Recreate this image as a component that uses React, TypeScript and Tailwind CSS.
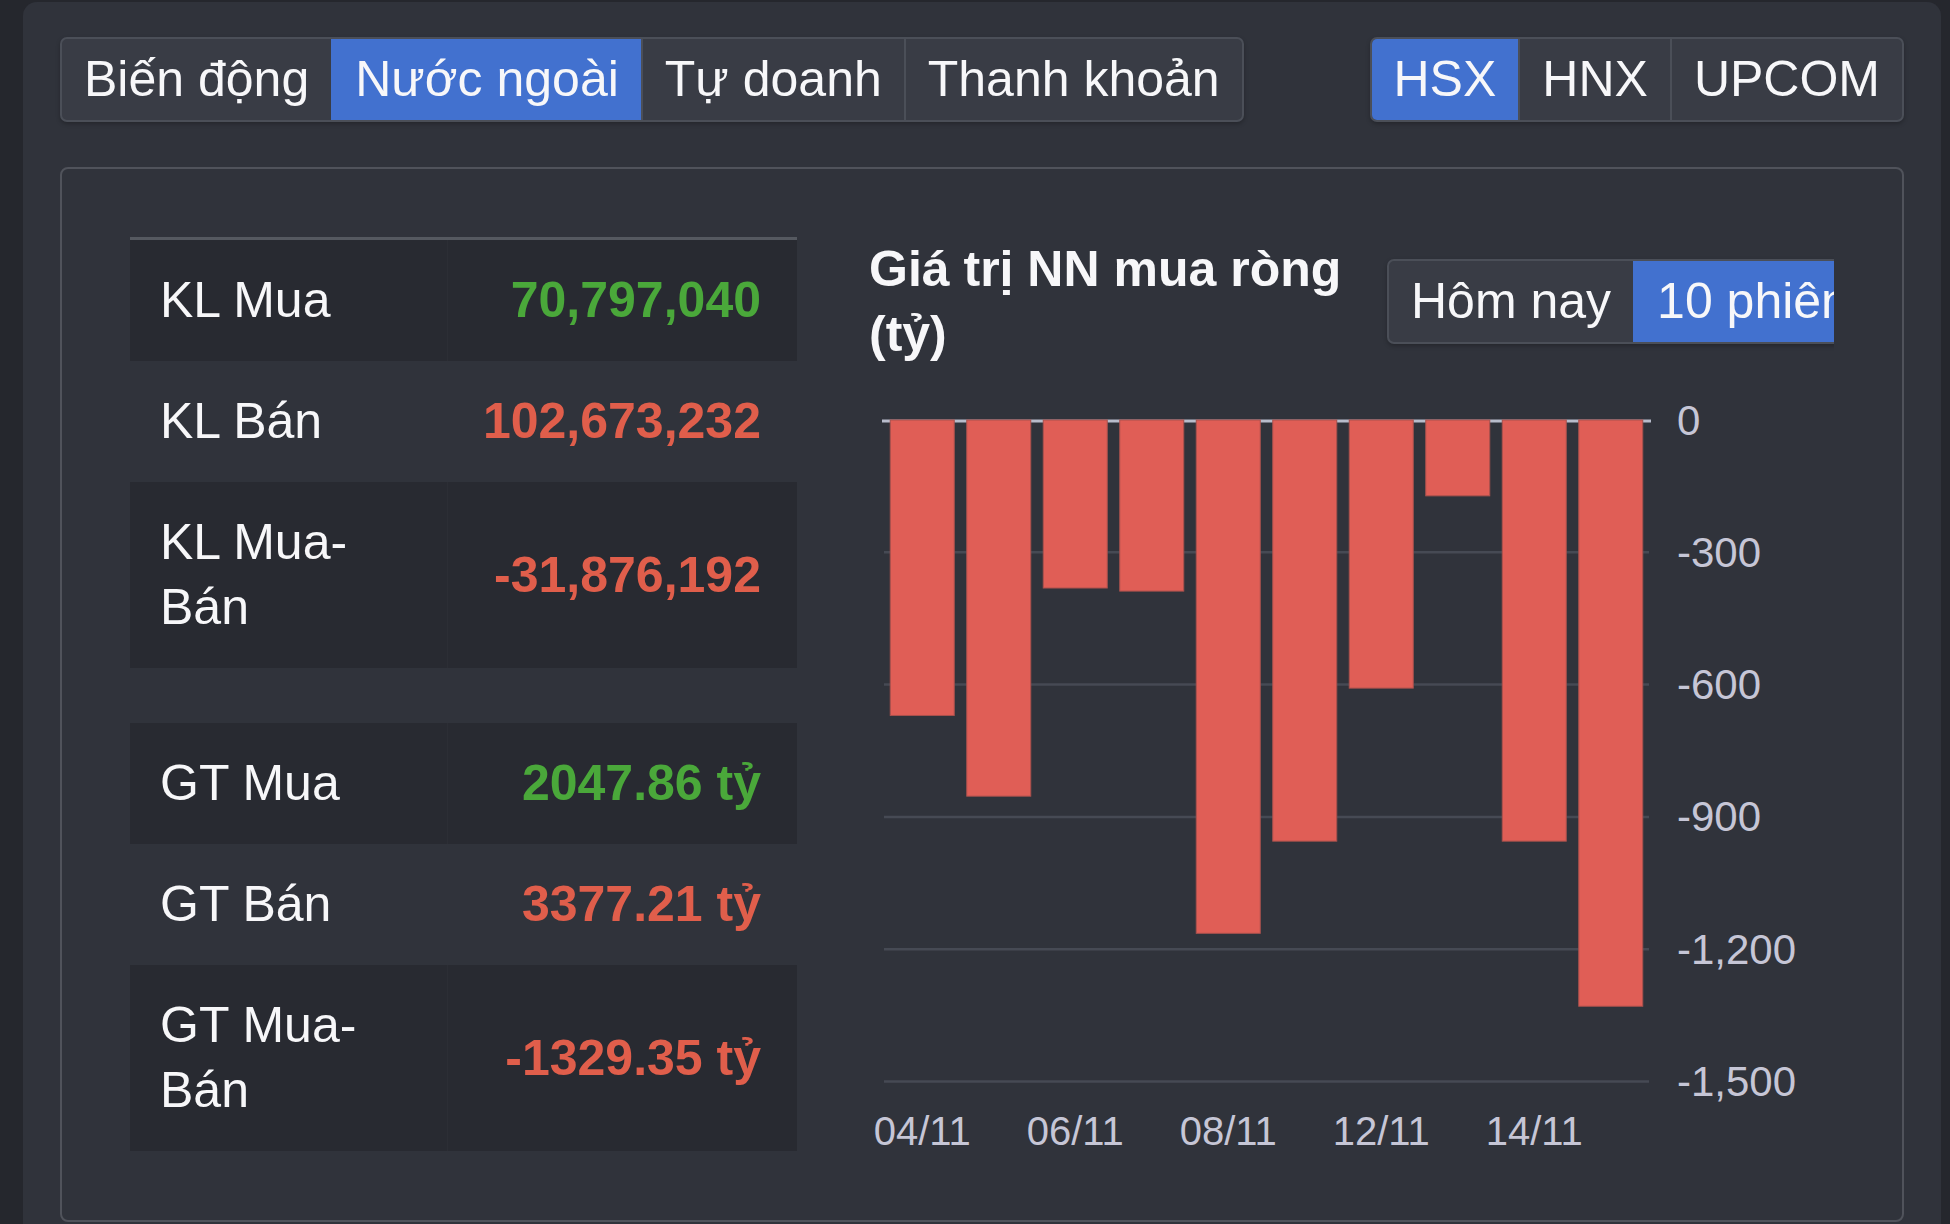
import React, { useState } from 'react'

type Row = { label: string; value: string; tone: 'up' | 'down' }

const klRows: Row[] = [
  { label: 'KL Mua', value: '70,797,040', tone: 'up' },
  { label: 'KL Bán', value: '102,673,232', tone: 'down' },
  { label: 'KL Mua-Bán', value: '-31,876,192', tone: 'down' },
]

const gtRows: Row[] = [
  { label: 'GT Mua', value: '2047.86 tỷ', tone: 'up' },
  { label: 'GT Bán', value: '3377.21 tỷ', tone: 'down' },
  { label: 'GT Mua-Bán', value: '-1329.35 tỷ', tone: 'down' },
]

const bars = [
  { date: '04/11', v: -670 },
  { date: '05/11', v: -853 },
  { date: '06/11', v: -381 },
  { date: '07/11', v: -388 },
  { date: '08/11', v: -1164 },
  { date: '11/11', v: -955 },
  { date: '12/11', v: -608 },
  { date: '13/11', v: -172 },
  { date: '14/11', v: -955 },
  { date: '15/11', v: -1329.35 },
]

function Segmented({ items, active, onChange }: { items: string[]; active: string; onChange: (v: string) => void }) {
  return (
    <div className="flex shrink-0 rounded-[7px] border-2 border-[#4b4f58] bg-[#393c45] shadow-[0_2px_4px_rgba(0,0,0,0.25)] overflow-hidden whitespace-nowrap">
      {items.map((it, i) => (
        <button
          key={it}
          onClick={() => onChange(it)}
          className={
            'px-[22px] py-[8px] leading-[65px] text-[50px] text-[#f7f7f9] ' +
            (i > 0 ? 'border-l-2 ' : '') +
            (it === active ? 'bg-[#4271cf] border-[#4271cf]' : 'border-[#4b4f58]')
          }
        >
          {it}
        </button>
      ))}
    </div>
  )
}

function StatTable({ rows, topBorder }: { rows: Row[]; topBorder?: boolean }) {
  return (
    <div className={topBorder ? 'border-t-[3px] border-[#555960]' : ''}>
      {rows.map((r, i) => (
        <div key={r.label} className={'flex ' + (i % 2 === 0 ? 'bg-[#282a31]' : '')}>
          <div className={'w-[318px] pl-[30px] py-[28px] leading-[65px] text-[50px] text-[#f7f7f9] ' + (i % 2 === 0 ? 'border-r border-[#2c2e35]' : '')}>
            {r.label.includes('-') ? (
              <>
                {r.label.split('-')[0]}-<br />
                {r.label.split('-')[1]}
              </>
            ) : (
              r.label
            )}
          </div>
          <div
            className={
              'flex-1 flex items-center justify-end pr-[36px] text-[50px] font-bold leading-[65px] ' +
              (r.tone === 'up' ? 'text-[#4aa83a]' : 'text-[#e05e4b]')
            }
          >
            {r.value}
          </div>
        </div>
      ))}
    </div>
  )
}

function Chart() {
  const zeroY = 53
  const k = 132.3 / 300
  const left = 15
  const slot = 76.5
  const ticks = [0, -300, -600, -900, -1200, -1500]
  const fmt = (n: number) => (n === 0 ? '0' : n.toLocaleString('en-US'))
  return (
    <svg width="965" height="785" viewBox="0 0 965 785" className="block">
      {ticks.slice(1).map((t) => (
        <line key={t} x1={left} x2={780} y1={zeroY - t * k} y2={zeroY - t * k} stroke="#464a54" strokeWidth="2.5" />
      ))}
      <line x1={left - 2} x2={782} y1={zeroY + 1} y2={zeroY + 1} stroke="#b8bccb" strokeWidth="3" />
      {bars.map((b, i) => (
        <rect
          key={b.date}
          x={left + i * slot + 6.25}
          y={zeroY}
          width={64}
          height={-b.v * k}
          fill="#e05e56"
          stroke="#a9514d"
          strokeWidth="1"
        />
      ))}
      {ticks.map((t) => (
        <text
          key={t}
          x={808}
          y={zeroY - t * k}
          dominantBaseline="central"
          fill="#c6c6d6"
          fontSize="42"
          fontFamily="'Liberation Sans', Arial, sans-serif"
        >
          {fmt(t)}
        </text>
      ))}
      {bars.map((b, i) =>
        i % 2 === 0 ? (
          <text
            key={b.date}
            x={left + (i + 0.5) * slot}
            y={778}
            textAnchor="middle"
            fill="#c6c6d6"
            fontSize="40"
            fontFamily="'Liberation Sans', Arial, sans-serif"
          >
            {b.date}
          </text>
        ) : null
      )}
    </svg>
  )
}

export default function App() {
  const [tab, setTab] = useState('Nước ngoài')
  const [floor, setFloor] = useState('HSX')
  const [range, setRange] = useState('10 phiên')

  return (
    <div className="min-h-screen bg-[#25272d] pt-[2px] pl-[23px] font-['Liberation_Sans',Arial,sans-serif] overflow-hidden">
      <div className="w-[1918px] min-h-[1222px] rounded-t-[14px] bg-[#30333b] px-[37px] pt-[35px]">
        <div className="flex justify-between">
          <Segmented items={['Biến động', 'Nước ngoài', 'Tự doanh', 'Thanh khoản']} active={tab} onChange={setTab} />
          <Segmented items={['HSX', 'HNX', 'UPCOM']} active={floor} onChange={setFloor} />
        </div>

        <div className="mt-[45px] rounded-[8px] border-2 border-[#50535b] px-[68px] pt-[68px] pb-[68px] flex gap-[72px]">
          <div className="w-[667px] shrink-0">
            <StatTable rows={klRows} topBorder />
            <div className="h-[55px]" />
            <StatTable rows={gtRows} />
          </div>

          <div className="flex-1 overflow-hidden">
            <div className="flex items-start gap-[28px]">
              <h2 className="w-[490px] shrink-0 text-[50px] font-bold leading-[65px] text-[#f7f7f9]">
                Giá trị NN mua ròng (tỷ)
              </h2>
              <div className="mt-[22px]">
                <Segmented items={['Hôm nay', '10 phiên']} active={range} onChange={setRange} />
              </div>
            </div>
            <Chart />
          </div>
        </div>
      </div>
    </div>
  )
}
